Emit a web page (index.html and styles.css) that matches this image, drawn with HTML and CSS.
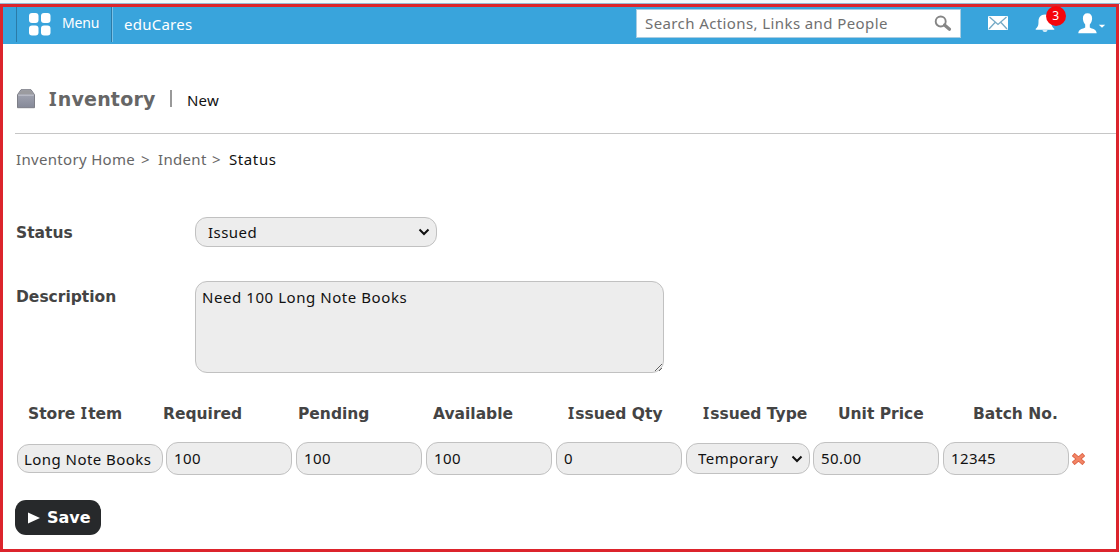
FILE: index.html
```html
<!DOCTYPE html>
<html lang="en">
<head>
<meta charset="utf-8">
<title>eduCares - Inventory</title>
<link rel="stylesheet" href="styles.css">
</head>
<body>
<div class="frame">
  <header class="topbar">
    <div class="menu">
      <svg class="menu-icon" width="22" height="23" viewBox="0 0 22 23" fill="#fff"><rect width="9.5" height="10" rx="3"/><rect x="12" width="9.5" height="10" rx="3"/><rect y="12.5" width="9.5" height="10" rx="3"/><rect x="12" y="12.5" width="9.5" height="10" rx="3"/></svg>
      <span class="menu-label">Menu</span>
    </div>
    <div class="brand">eduCares</div>
    <div class="search">
      <span class="search-text">Search Actions, Links and People</span>
      <svg width="18" height="17" viewBox="0 0 18 17" fill="none" stroke="#858585"><circle cx="6.7" cy="6.5" r="5" stroke-width="1.9"/><path d="M10.5 10l5 4.3" stroke-width="3.2" stroke-linecap="round"/></svg>
    </div>
    <svg class="mail" width="20" height="14" viewBox="0 0 20 14"><rect width="20" height="14" rx="1" fill="#fff"/><path d="M1.5 1l8.5 7.5L18.500 1M1 13l6-6.500M19 13l-6-6.500" fill="none" stroke="#74a9c5" stroke-width="1.300"/></svg>
    <div class="bell">
      <svg width="20" height="19" viewBox="0 0 20 19" fill="#fff"><path d="M10 0.500c-4.500 0-6.500 3-6.500 7 0 4.200-.7 5.700-2.800 7.200v1h18.600v-1c-2.100-1.500-2.800-3-2.800-7.200 0-4-2-7-6.500-7zM7.500 16.300c.5 2 4.500 2 5 0z"/></svg>
      <span class="badge">3</span>
    </div>
    <svg class="user" width="28" height="21" viewBox="0 0 28 21" fill="#fff"><path d="M9.500.3C6.500.3 4.800 2.300 4.900 5.500c.1 2.700 1 4.400 2.300 5.900v3C5 15.800.4 16 .3 20.200h18.400c-.1-4.200-4.700-4.400-6.900-5.800v-3c1.300-1.500 2.200-3.200 2.300-5.900.1-3.200-1.600-5.200-4.600-5.200z"/><path d="M20.800 11.800h6.400l-3.200 3z"/></svg>
  </header>
  <main class="content">
    <div class="title">
      <svg class="box" width="18" height="20" viewBox="0 0 18 20"><defs><linearGradient id="box-face" x1="0" y1="0" x2="0" y2="1"><stop offset="0" stop-color="#a9abb8"/><stop offset="1" stop-color="#858998"/></linearGradient></defs><path d="M4 .7h10l3.500 5v13H.5v-13z" fill="url(#box-face)" stroke="#7d7e87"/><path d="M4.300 1.300h9.400l2.900 4.300H1.400z" fill="#9b9b9f"/><path d="M1.200 6.200h15.600" stroke="#c2c4ce"/></svg>
      <h1><span class="slab">I</span>nventory</h1>
      <span class="divider"></span>
      <span class="new">New</span>
    </div>
    <nav class="crumbs"><span class="c-home">Inventory Home</span><span class="gt">&gt;</span><span class="c-indent">Indent</span><span class="gt">&gt;</span><span class="current">Status</span></nav>
    <div class="field status-field">
      <label for="status">Status</label>
      <select id="status" class="control status"><option>Issued</option></select>
    </div>
    <div class="field desc-field">
      <label for="description">Description</label>
      <textarea id="description" class="control description">Need 100 Long Note Books</textarea>
    </div>
    <div class="heads">
      <span>Store <span class="slab">I</span>tem</span><span>Required</span><span>Pending</span><span>Available</span><span><span class="slab">I</span>ssued Qty</span><span><span class="slab">I</span>ssued Type</span><span>Unit Price</span><span>Batch No.</span>
    </div>
    <div class="items">
      <input class="control item" value="Long Note Books">
      <input class="control num" value="100">
      <input class="control num" value="100">
      <input class="control num" value="100">
      <input class="control num" value="0">
      <select class="control type"><option>Temporary</option></select>
      <input class="control num" value="50.00">
      <input class="control num" value="12345">
      <svg class="remove" width="13" height="12" viewBox="0 0 13 12"><path d="M2.800 2.800l7.400 6.400M10.200 2.800l-7.400 6.400" stroke="#dc6245" stroke-width="4.200" stroke-linecap="square"/><path d="M2.800 2.800l7.400 6.400M10.200 2.800l-7.400 6.400" stroke="#f28565" stroke-width="2.600" stroke-linecap="square"/></svg>
    </div>
    <button class="save"><svg width="12" height="12" viewBox="0 0 12 12"><path d="M0 .5L12 6 0 11.500z" fill="#fff"/></svg><span>Save</span></button>
  </main>
</div>
</body>
</html>
```
FILE: styles.css
```css
* { box-sizing: border-box; }
body {
  margin: 0;
  padding-top: 4px;
  height: 552px;
  overflow: hidden;
  background: linear-gradient(#f2f8fb 0, #f2f8fb 3px, #9ab9d3 3px, #9ab9d3 4px, #fff 4px);
  font: 15px/20px "Noto Sans", sans-serif;
  letter-spacing: .45px;
  color: #111;
}
.frame { width: 1119px; height: 548px; border: 3px solid #dc242c; background: #fff; }
.topbar { display: flex; height: 37px; background: #39a4dc; color: #fff; }
.menu {
  display: flex;
  width: 96px;
  height: 35px;
  margin-left: 13px;
  padding: 6px 0 0 12px;
  border-left: 1px solid #2b7ba7;
  border-right: 1px solid #2b7ba7;
  box-shadow: 1px 0 #79c1e6;
}
.menu-label { margin: 0 0 0 11px; font-size: 14px; line-height: 20px; letter-spacing: -.2px; }
.brand { width: 512px; padding: 7px 0 0 12px; letter-spacing: .25px; }
.search {
  display: flex;
  justify-content: space-between;
  width: 325px;
  height: 29px;
  margin: 2px 0 0 12px;
  padding: 3px 8px 0 8px;
  border: 1px solid #a9cde2;
  background: #fff;
  color: #707070;
  letter-spacing: .4px;
}
.search svg { margin-top: 2px; }
.mail { margin: 9px 0 0 27px; }
.bell { position: relative; width: 20px; margin: 7px 0 0 27px; }
.badge {
  position: absolute;
  left: 11px;
  top: -8px;
  width: 20px;
  height: 20px;
  border-radius: 50%;
  background: #f5060b;
  font-size: 12px;
  text-align: center;
}
.user { margin: 6px 0 0 23px; }
.content { padding-left: 12px; }
.title { display: flex; height: 90px; padding-top: 45px; border-bottom: 1px solid #c6c6c6; }
.box { margin: 0 0 0 2px; }
h1 { margin: -3px 0 0 14px; width: 107px; font: 700 19px/26px "DejaVu Sans", sans-serif; color: #666; letter-spacing: .2px; white-space: nowrap; }
.divider { width: 2px; height: 17px; margin: 1px 0 0 14px; background: #999; }
.new { margin: 1px 0 0 15px; letter-spacing: .2px; }
.crumbs { display: flex; padding: 15px 0 1px 1px; color: #666; white-space: nowrap; letter-spacing: .32px; }
.c-home { width: 125px; }
.gt { width: 17px; letter-spacing: 0; }
.c-indent { width: 54px; }
.current { color: #111; letter-spacing: .6px; }
.field { display: flex; }
.status-field { margin-top: 47px; height: 64px; }
.desc-field { height: 92px; }
label { width: 180px; padding: 6px 0 0 1px; }
label, .heads { color: #444; font: 700 15.5px/20px "DejaVu Sans", sans-serif; letter-spacing: 0; }
.slab { font-family: "Noto Sans", sans-serif; font-size: 1.02em; line-height: 1; letter-spacing: 1.2px; }
.control {
  display: block;
  margin: 0;
  border: 1px solid #c1c1c1;
  border-radius: 12px;
  background-color: #ededed;
  color: #111;
  font: 15px/20px "Noto Sans", sans-serif;
  letter-spacing: .45px;
  outline: 0;
}
select.control {
  appearance: none;
  background-image: url("data:image/svg+xml,%3Csvg xmlns='http://www.w3.org/2000/svg' width='12' height='8' viewBox='0 0 12 8'%3E%3Cpath d='M1.500 1.500L6 6l4.500-4.500' fill='none' stroke='%23111' stroke-width='2'/%3E%3C/svg%3E");
  background-repeat: no-repeat;
  background-position: right 6px center;
}
.status { width: 242px; height: 30px; padding: 0 20px 0 12px; }
.description { width: 469px; height: 92px; padding: 5px 6px; letter-spacing: .56px; resize: both; }
.heads { display: grid; grid-template-columns: repeat(8, 135px); height: 20px; margin: 31px 0 0 13px; white-space: nowrap; }
.items { display: flex; align-items: center; gap: 4px; margin: 18px 0 0 2px; height: 33px; }
.item { width: 146px; height: 29px; margin-right: -1px; padding: 1px 6px 0; }
.num { width: 126px; height: 33px; padding: 0 7px 2px; }
.type { width: 124px; height: 31px; margin-right: -1px; padding: 0 18px 2px 11px; }
.remove { margin-left: -1px; }
.save {
  display: flex;
  align-items: center;
  gap: 7px;
  width: 86px;
  height: 35px;
  margin-top: 25px;
  padding: 1px 0 0 13px;
  border: 0;
  border-radius: 11px;
  background: #27292b;
  color: #fff;
  font: 700 16px/20px "DejaVu Sans", sans-serif;
}
```
